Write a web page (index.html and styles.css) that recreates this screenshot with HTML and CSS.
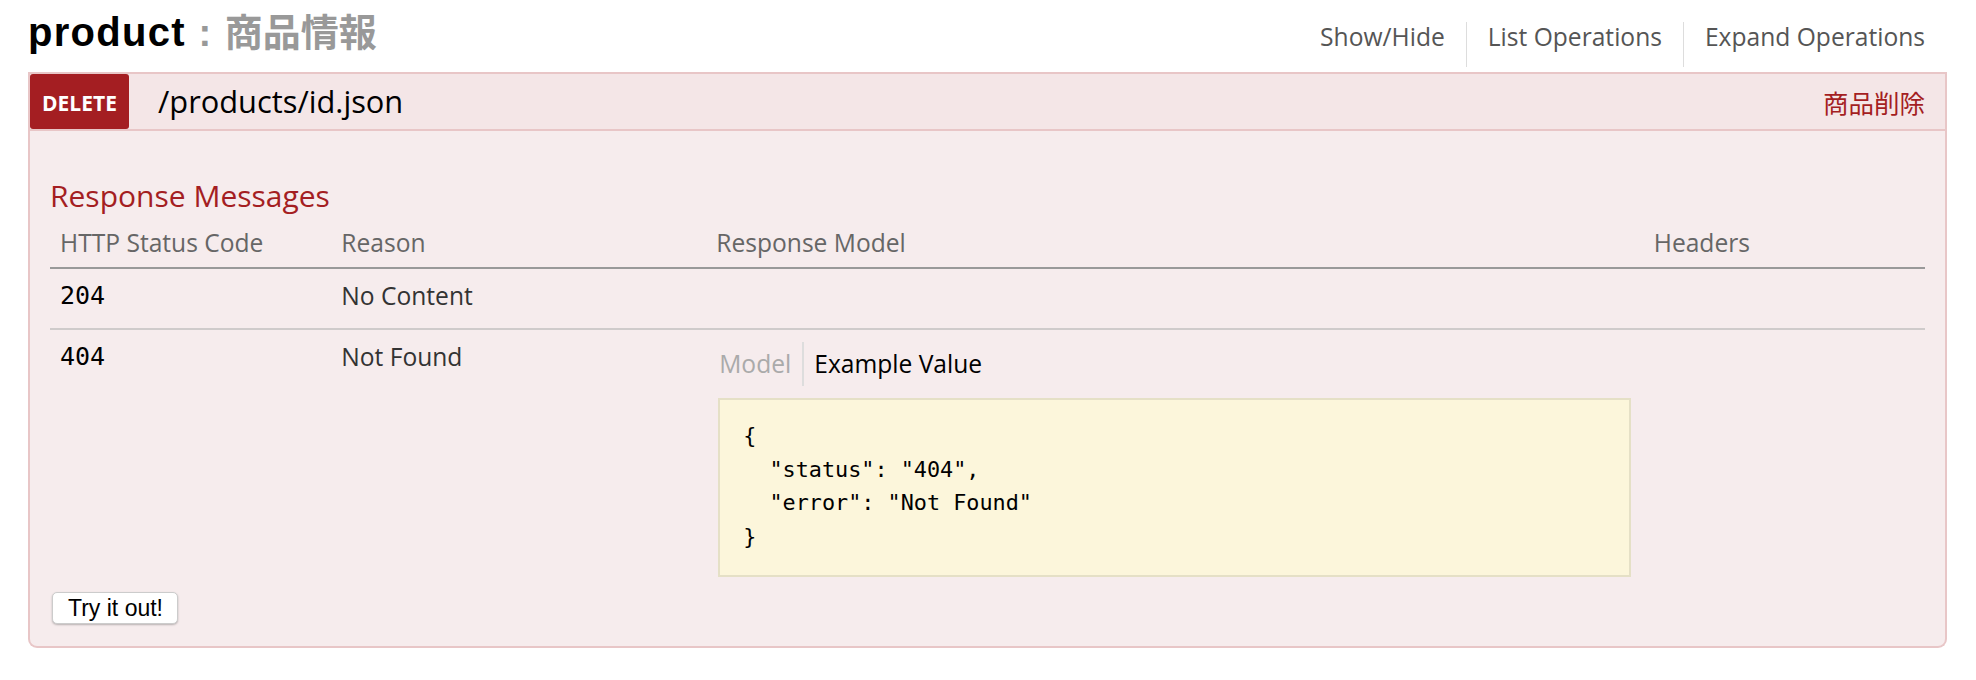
FILE: index.html
```html
<!DOCTYPE html>
<html lang="ja">
<head>
<meta charset="utf-8">
<title>product : 商品情報</title>
<link rel="stylesheet" href="styles.css">
</head>
<body>
<div class="page">
  <div class="resource-heading">
    <h2 class="resource-title"><span class="resource-name">product</span><span class="resource-sep"> : </span><span class="resource-desc">商品情報</span></h2>
    <ul class="options">
      <li class="option"><a class="option-link">Show/Hide</a></li>
      <li class="option"><a class="option-link">List Operations</a></li>
      <li class="option"><a class="option-link">Expand Operations</a></li>
    </ul>
  </div>
  <div class="operation">
    <div class="op-heading">
      <span class="method">DELETE</span>
      <span class="path">/products/id.json</span>
      <span class="summary">商品削除</span>
    </div>
    <div class="op-content">
      <h4 class="section-title">Response Messages</h4>
      <table class="responses">
        <thead>
          <tr>
            <th class="col-code">HTTP Status Code</th>
            <th class="col-reason">Reason</th>
            <th class="col-model">Response Model</th>
            <th class="col-headers">Headers</th>
          </tr>
        </thead>
        <tbody>
          <tr class="row">
            <td class="cell code">204</td>
            <td class="cell">No Content</td>
            <td class="cell"></td>
            <td class="cell"></td>
          </tr>
          <tr class="row last">
            <td class="cell code">404</td>
            <td class="cell">Not Found</td>
            <td class="cell">
              <ul class="model-tabs">
                <li class="tab inactive">Model</li>
                <li class="tab active">Example Value</li>
              </ul>
<pre class="snippet">{
  "status": "404",
  "error": "Not Found"
}</pre>
            </td>
            <td class="cell"></td>
          </tr>
        </tbody>
      </table>
      <button class="try-btn" type="button">Try it out!</button>
    </div>
  </div>
</div>
</body>
</html>
```

FILE: styles.css
```css
html, body {
  margin: 0;
  padding: 0;
  background: #ffffff;
}

body {
  font-family: "Open Sans", "Noto Sans CJK JP", sans-serif;
  color: #000;
}

.page {
  padding: 0 29px 0 28px;
}

/* resource heading */
.resource-heading {
  display: flex;
  justify-content: space-between;
  align-items: flex-start;
  height: 72px;
  padding-top: 9px;
  box-sizing: border-box;
}

.resource-title {
  margin: 0;
  font-family: "Liberation Sans", "Noto Sans CJK JP", sans-serif;
  font-weight: bold;
  line-height: 46px;
  white-space: nowrap;
}

.resource-name {
  font-size: 40px;
  letter-spacing: 1.3px;
  color: #000;
}

.resource-sep {
  font-size: 38px;
  color: #999;
  padding-right: 3px;
  padding-left: 2px;
}

.resource-desc {
  font-size: 38px;
  color: #999;
}

.options {
  display: flex;
  list-style: none;
  margin: 13px 22px 0 0;
  padding: 0;
}

.option {
  padding: 2px 21px 14px;
  line-height: 25px;
  border-right: 1px solid #ddd;
}

.option:last-child {
  border-right: none;
  padding-right: 0;
}

.option-link {
  font-family: "Open Sans", sans-serif;
  font-size: 24.6px;
  color: #555;
  text-decoration: none;
}

/* operation */
.op-heading {
  display: flex;
  align-items: center;
  height: 55px;
  padding-right: 20px;
  background: #f4e6e7;
  border: 2px solid #e8c6c7;
}

.method {
  display: flex;
  align-items: center;
  justify-content: center;
  width: 99px;
  height: 55px;
  padding-top: 3px;
  box-sizing: border-box;
  background: #a41e22;
  color: #fff;
  font-family: "Open Sans", sans-serif;
  font-weight: 700;
  font-size: 21px;
  border-radius: 3px;
}

.path {
  margin-left: 29px;
  font-family: "Open Sans", sans-serif;
  font-size: 30.8px;
  color: #000;
  padding-bottom: 2px;
}

.summary {
  margin-left: auto;
  font-family: "Noto Sans CJK JP", sans-serif;
  font-size: 25.5px;
  color: #a41e22;
}

.op-content {
  padding: 44px 20px 22px;
  background: #f6eced;
  border: 2px solid #e8c6c7;
  border-top: none;
  border-radius: 0 0 9px 9px;
}

.section-title {
  margin: 0;
  font-family: "Open Sans", sans-serif;
  font-weight: normal;
  font-size: 30px;
  color: #a41e22;
}

/* table */
.responses {
  width: 100%;
  table-layout: fixed;
  border-collapse: separate;
  border-spacing: 0;
  font-size: 24.6px;
}

.responses th,
.responses td {
  box-sizing: border-box;
}

.col-code { width: 15%; }
.col-reason { width: 20%; }
.col-model { width: 50%; }
.col-headers { width: 15%; }

.responses th {
  text-align: left;
  font-weight: normal;
  color: #666;
  padding: 10px 10px 8px;
  border-bottom: 2px solid #999;
}

.cell {
  vertical-align: top;
  padding: 10px 10px 15px;
  line-height: 33.5px;
  color: #333;
  border-bottom: 2px solid #cfcbcb;
}

.row.last .cell {
  border-bottom: none;
  padding-bottom: 5px;
}

.code {
  font-family: "DejaVu Sans Mono", monospace;
  font-size: 25px;
  color: #000;
}

.model-tabs {
  display: flex;
  list-style: none;
  margin: 2px 0 0;
  padding: 0;
}

.tab {
  padding: 5px 10px 6px;
  line-height: 33.5px;
}

.tab.inactive {
  color: #aaa;
  padding-left: 3px;
  padding-right: 11px;
  border-right: 2px solid #ddd;
}

.tab.active {
  color: #000;
}

.snippet {
  box-sizing: border-box;
  width: 913px;
  margin: 12px 0 0 2px;
  padding: 19px 23px 22px;
  background: #fcf6db;
  border: 2px solid #e5e0c6;
  font-family: "DejaVu Sans Mono", monospace;
  font-size: 21.8px;
  line-height: 33.5px;
  color: #000;
}

.try-btn {
  display: block;
  margin: 10px 0 0 2px;
  padding: 2px 14px 2px 15px;
  height: 32px;
  box-sizing: border-box;
  font-family: "Liberation Sans", Arial, sans-serif;
  font-size: 23px;
  line-height: 26px;
  color: #000;
  background: #fff;
  border: 1px solid #ccc;
  border-radius: 5px;
  box-shadow: 0 1px 2px rgba(0, 0, 0, 0.25);
}
```
